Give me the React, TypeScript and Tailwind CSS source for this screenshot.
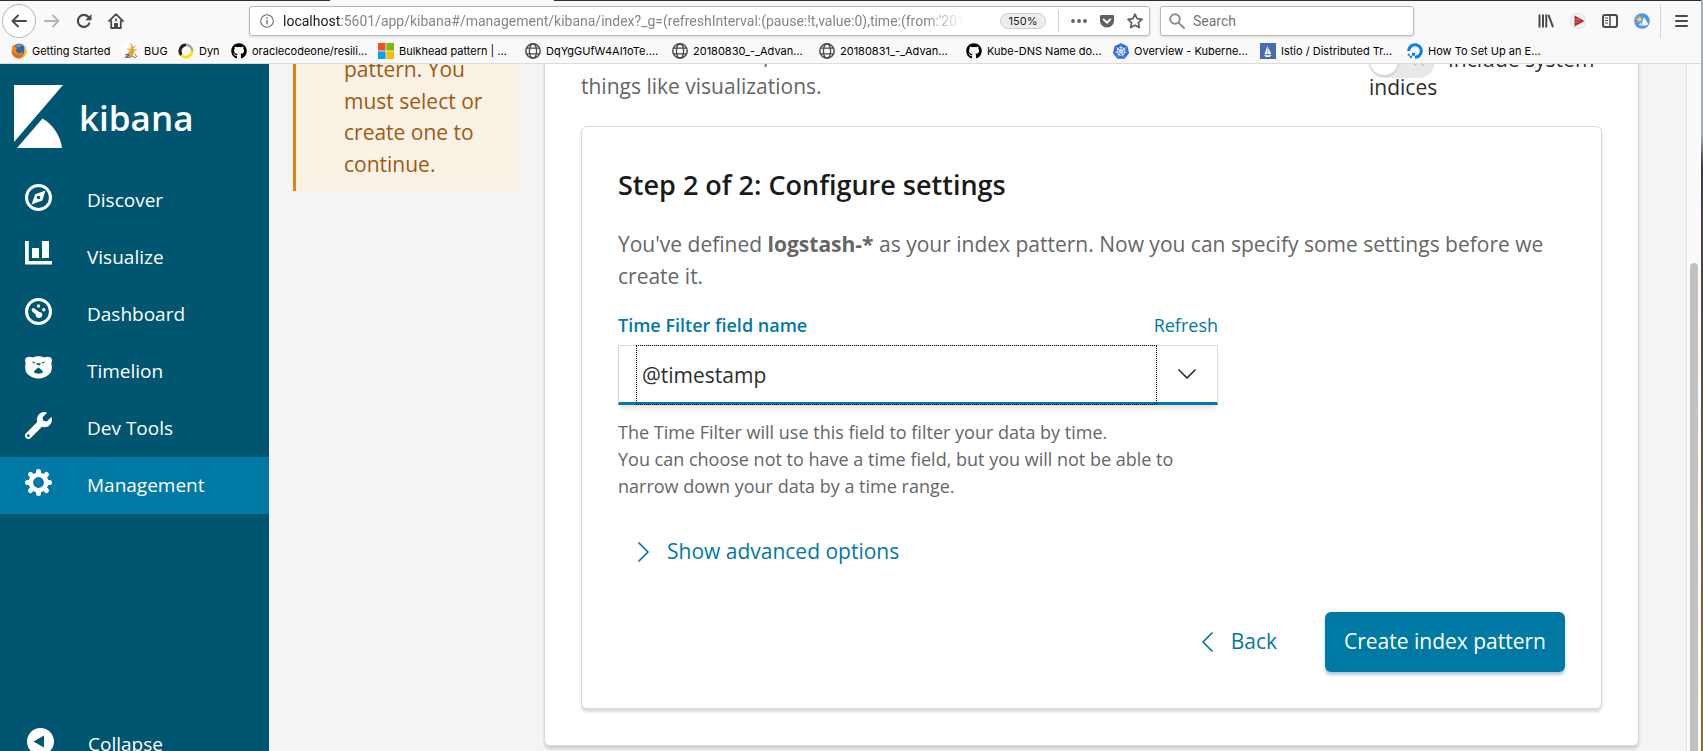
import type { ReactNode } from "react";
import { FaGithub, FaGetPocket, FaWrench, FaDigitalOcean } from "react-icons/fa";
import { SiKubernetes } from "react-icons/si";

function FirefoxIcon() {
  return (
    <svg viewBox="0 0 16 16" className="size-4 shrink-0" aria-hidden="true">
      <circle cx="8" cy="8" r="7.5" fill="#e8641b" />
      <circle cx="8.6" cy="6.6" r="5.4" fill="#2b66b0" />
      <path d="M5 2.5C7 1 10 1 12 3c-2-.6-3 .2-3.500 1.200C7 4 6 3.500 5 2.500z" fill="#5aa7e0" />
      <path d="M.8 5C1 3.500 1.500 2.500 2.300 2c.1 1 .6 1.600 1.400 1.900 1 .2 1.800.1 2.800.9L4.800 6.600c-.2 2 1.200 3.600 3.400 3.600 1.800 0 2.600-1.200 3.900-.8-1 2.300-3.600 3-6 2.200C3 10.600 1 8 .8 5z" fill="#f08a1d" />
      <path d="M12.500 2c2.500 2 3.600 5.500 2.400 8.600-1 2.900-3.800 4.900-6.900 4.900 3-1 4.500-3 5-5.500.5-3 .3-5.500-.5-8z" fill="#fbbf24" />
    </svg>
  );
}

function BugIcon() {
  return (
    <svg viewBox="0 0 16 16" className="size-4 shrink-0" aria-hidden="true">
      <rect width="16" height="16" fill="#fdfdfb" />
      <path d="M1 15l5-6 4 2-2 4z" fill="#8d9a8a" />
      <path d="M3 15l4-4M5 12l-3-1M12 11l2 3M9 13l4 2" stroke="#4c4a3a" strokeWidth=".8" />
      <path d="M8 1.500c1.500 0 2 1.500 1.800 2.800 1.200 2 2 4.500.7 7.200L7 13.500 5.500 10C6.500 7.500 8 6 8 4z" fill="#e9a51d" />
      <path d="M10 5l2.500-2.500M10.500 7.500l3-1M7 7L4.500 5.500M8.500 2L7 .5" stroke="#c77d10" strokeWidth=".9" />
    </svg>
  );
}

function DynIcon() {
  return (
    <svg viewBox="0 0 16 16" className="size-4 shrink-0" aria-hidden="true">
      <path d="M8 .5a7.500 7.500 0 0 0-5.500 12.600L4.500 11A5 5 0 0 1 8 3.200z" fill="#222" />
      <path d="M8 .5a7.500 7.500 0 0 1 7.500 7.500L13 9A5 5 0 0 0 8 3.200z" fill="#a8a8a0" />
      <path d="M15.500 8a7.500 7.500 0 0 1-13 5.100l1.800-2C7 14 12 13 13 7.500z" fill="#f5e50a" />
    </svg>
  );
}

function WindowsIcon() {
  return (
    <svg viewBox="0 0 16 16" className="size-4 shrink-0" aria-hidden="true">
      <path d="M0 0h7.600v7.600H0z" fill="#f25022" />
      <path d="M8.400 0H16v7.600H8.400z" fill="#7fba00" />
      <path d="M0 8.400h7.600V16H0z" fill="#00a4ef" />
      <path d="M8.400 8.400H16V16H8.400z" fill="#ffb900" />
    </svg>
  );
}

function GlobeIcon() {
  return (
    <svg viewBox="0 0 16 16" className="size-4 shrink-0" fill="none" stroke="#4a4a4a" aria-hidden="true">
      <circle cx="8" cy="8" r="7.200" strokeWidth="1.500" />
      <ellipse cx="8" cy="8" rx="3.600" ry="7.200" strokeWidth="1.300" />
      <path d="M1.500 5.200h13M1.500 10.800h13" strokeWidth="1.300" />
    </svg>
  );
}

function SailIcon() {
  return (
    <svg viewBox="0 0 16 16" className="size-4 shrink-0" aria-hidden="true">
      <rect width="16" height="16" fill="#466bb0" />
      <path d="M7.600 2v9L4.500 11.500zM8.200 4.500l3 6.500-3 .3zM4 12.300h8L9.500 14h-3.500z" fill="#fff" />
    </svg>
  );
}

type Bookmark = { label: string; icon: ReactNode; width: string };

const wide = "w-[147px]";
const bookmarks: Bookmark[] = [
  { label: "Getting Started", icon: <FirefoxIcon />, width: "w-[112px]" },
  { label: "BUG", icon: <BugIcon />, width: "w-[55px]" },
  { label: "Dyn", icon: <DynIcon />, width: "w-[53px]" },
  { label: "oraclecodeone/resili...", icon: <FaGithub className="size-4 shrink-0" />, width: wide },
  { label: "Bulkhead pattern | ...", icon: <WindowsIcon />, width: wide },
  { label: "DqYgGUfW4AI1oTe....", icon: <GlobeIcon />, width: wide },
  { label: "20180830_-_Advan...", icon: <GlobeIcon />, width: wide },
  { label: "20180831_-_Advan...", icon: <GlobeIcon />, width: wide },
  { label: "Kube-DNS Name do...", icon: <FaGithub className="size-4 shrink-0" />, width: wide },
  { label: "Overview - Kuberne...", icon: <SiKubernetes className="size-4 shrink-0 text-[#326ce5]" />, width: wide },
  { label: "Istio / Distributed Tr...", icon: <SailIcon />, width: wide },
  { label: "How To Set Up an E...", icon: <FaDigitalOcean className="size-4 shrink-0 text-[#0080ff]" />, width: wide },
];

function Toolbar() {
  return (
    <div className="flex h-10 items-center pr-3 pl-0.5">
      <button aria-label="Back" className="flex size-[34px] shrink-0 items-center justify-center rounded-full border border-[#b5b5b5] bg-white">
        <svg viewBox="0 0 16 16" className="size-4" fill="none" stroke="#4a4a4a" strokeWidth="2" strokeLinecap="round" strokeLinejoin="round">
          <path d="M15 8H1.500M7 2.500L1.500 8 7 13.500" />
        </svg>
      </button>
      <button aria-label="Forward" className="ml-2 shrink-0">
        <svg viewBox="0 0 16 16" className="size-4" fill="none" stroke="#b3b3b3" strokeWidth="1.800" strokeLinecap="round" strokeLinejoin="round">
          <path d="M1 8h13.500M9 2.500L14.500 8 9 13.500" />
        </svg>
      </button>
      <button aria-label="Reload" className="ml-4 shrink-0">
        <svg viewBox="0 0 16 16" className="size-4" fill="none" stroke="#4a4a4a" strokeWidth="2.200">
          <path d="M13.300 10.400A6 6 0 1 1 12.200 3.800" strokeLinecap="round" />
          <path d="M15.500 1v6.200H9.300z" fill="#4a4a4a" stroke="none" />
        </svg>
      </button>
      <button aria-label="Home" className="ml-4 shrink-0">
        <svg viewBox="0 0 16 16" className="size-4" fill="none" stroke="#4a4a4a" strokeWidth="1.800" strokeLinejoin="round" strokeLinecap="round">
          <path d="M1 8.200L8 1.200l7 7M3.200 8v7h9.600V8" />
          <path d="M6.500 15v-4.500h3V15z" fill="#4a4a4a" strokeWidth="1" />
          <path d="M8 6.500v1" />
        </svg>
      </button>

      <div className="ml-[125px] flex h-[30px] w-[901px] min-w-0 shrink items-center rounded-[3px] border border-[#b9b9b9] bg-white pr-1.5 pl-2.5 shadow-sm">
        <svg viewBox="0 0 14 14" className="size-3.5 shrink-0" fill="none" stroke="#6a6a6a" strokeWidth="1.100" aria-hidden="true">
          <circle cx="7" cy="7" r="6.300" />
          <path d="M7 6v4.500M7 3.300v1.400" strokeWidth="1.400" />
        </svg>
        <div className="ml-[9px] min-w-0 flex-1 overflow-hidden font-[Roboto,sans-serif] text-[14px] whitespace-nowrap text-[#858585] [mask-image:linear-gradient(to_right,black_94%,transparent)]">
          <span className="text-[#1a1a1a]">localhost</span>
          :5601/app/kibana#/management/kibana/index?_g=(refreshInterval:(pause:!t,value:0),time:(from:'2018
        </div>
        <button className="ml-[35px] h-4 w-[46px] shrink-0 rounded-full border border-[#cfcfcf] bg-[#ededed] text-[11px] leading-[14px] text-[#222]">150%</button>
        <span className="ml-3 h-[22px] w-px shrink-0 bg-[#cfcfcf]" />
        <button aria-label="Page actions" className="ml-3 shrink-0">
          <svg viewBox="0 0 16 16" className="size-4" fill="#606060">
            <circle cx="2" cy="8" r="1.900" />
            <circle cx="8" cy="8" r="1.900" />
            <circle cx="14" cy="8" r="1.900" />
          </svg>
        </button>
        <button aria-label="Save to Pocket" className="ml-3 shrink-0">
          <FaGetPocket className="size-4 text-[#606060]" />
        </button>
        <button aria-label="Bookmark this page" className="ml-3 shrink-0">
          <svg viewBox="0 0 16 16" className="size-4" fill="none" stroke="#606060" strokeWidth="1.700" strokeLinejoin="round">
            <path d="M8 1.200l2.100 4.500 4.900.6-3.600 3.400.9 4.900L8 12.200l-4.300 2.400.9-4.900L1 6.300l4.900-.6z" />
          </svg>
        </button>
      </div>

      <label className="ml-2.5 flex h-[30px] w-[254px] shrink-0 items-center gap-2 rounded-[3px] border border-[#b9b9b9] bg-white px-2 shadow-sm">
        <svg viewBox="0 0 16 16" className="size-4 shrink-0" fill="none" stroke="#8c8c8c" strokeWidth="2" strokeLinecap="round" aria-hidden="true">
          <circle cx="6" cy="6" r="4.800" />
          <path d="M9.600 9.600L15 15" />
        </svg>
        <input type="search" aria-label="Search" placeholder="Search" className="min-w-0 flex-1 bg-transparent font-[Roboto,sans-serif] text-[14px] outline-none placeholder:text-[#757575]" />
      </label>

      <div className="ml-auto flex items-center gap-4">
        <button aria-label="Library">
          <svg viewBox="0 0 16 16" className="size-4" fill="none" stroke="#4a4a4a" strokeWidth="2">
            <path d="M1.500 1.500v13M5 1.500v13M8.300 1.500v13M10.500 1.800l4.500 12.400" />
          </svg>
        </button>
        <button aria-label="Player">
          <svg viewBox="0 0 16 16" className="size-4">
            <circle cx="8" cy="8" r="7.500" fill="#f7f7f7" stroke="#dedede" />
            <path d="M4.500 2.500L14.500 8l-10 5.500z" fill="#b7282e" />
            <path d="M5 7c2-1.500 4-.8 5 1M5.500 9.500c1-.8 2-.7 3 0" stroke="#e7a9aa" strokeWidth=".8" fill="none" />
          </svg>
        </button>
        <button aria-label="Sidebars">
          <svg viewBox="0 0 16 16" className="size-4" fill="none" stroke="#4a4a4a">
            <rect x="1" y="2" width="14" height="12" rx="2" strokeWidth="2" />
            <path d="M8 2v12" strokeWidth="1.500" />
            <path d="M3 5h3M3 7.500h3M3 10h3" />
          </svg>
        </button>
        <button aria-label="Weather">
          <svg viewBox="0 0 16 16" className="size-4">
            <circle cx="8" cy="8" r="7.800" fill="#4b94e8" />
            <circle cx="5.500" cy="6.500" r="2.300" fill="#f9cf45" />
            <path d="M5.500 2.500v1.200M1.800 6.500H3M2.800 3.500l.8.8M8.200 3.500l-.8.8M2.800 9.500l.8-.8" stroke="#f9cf45" strokeWidth=".9" />
            <path d="M7 12.500l3-8.500 4 6.500c0 1.200-.8 2-2 2z" fill="#f3f6fb" />
            <path d="M5 12.500a2 2 0 0 1 2-2.500l2 1v1.500z" fill="#cfdcec" />
          </svg>
        </button>
        <span className="-mr-1 -ml-1.5 h-[34px] w-px bg-[#d6d6d6]" />
        <button aria-label="Open menu">
          <svg viewBox="0 0 16 16" className="size-4" stroke="#4a4a4a" strokeWidth="2" strokeLinecap="round">
            <path d="M3 3h11M3 8h11M3 13h11" />
          </svg>
        </button>
      </div>
    </div>
  );
}

function BrowserChrome() {
  return (
    <header className="shrink-0 border-b border-[#dcdcdc] bg-[#f9f9fa] font-[Inter,sans-serif]">
      <div className="flex h-px">
        <span className="w-[330px] bg-[#2b2f3f]" />
        <span className="w-[224px]" />
        <span className="flex-1 bg-[#2b2f3f]" />
      </div>
      <Toolbar />
      <nav aria-label="Bookmarks" className="flex h-[22px] items-start pt-0.5 pl-[11px]">
        {bookmarks.map((b) => (
          <a key={b.label} href="#bookmark" className={`flex shrink-0 items-center gap-[5px] text-[11px] leading-4 whitespace-nowrap text-black ${b.width}`}>
            {b.icon}
            {b.label}
          </a>
        ))}
      </nav>
    </header>
  );
}

function DiscoverIcon() {
  return (
    <svg viewBox="0 0 27 27" className="size-[27px]" aria-hidden="true">
      <circle cx="13.500" cy="13.500" r="12" fill="none" stroke="#fff" strokeWidth="3" />
      <path fillRule="evenodd" d="M20.500 6.500l-3.200 10-10.800 4 3.700-10.300zM13.500 11.700a1.800 1.800 0 1 0 0 3.600 1.800 1.800 0 0 0 0-3.600z" fill="#fff" />
    </svg>
  );
}

function VisualizeIcon() {
  return (
    <svg viewBox="0 0 27 27" className="size-[27px]" fill="#fff" aria-hidden="true">
      <path d="M0 0h3.800v20H27v3.500H0zM7 7h7v10H7zM17 0h7v17h-7z" />
    </svg>
  );
}

function DashboardIcon() {
  return (
    <svg viewBox="0 0 27 27" className="size-[27px]" aria-hidden="true">
      <circle cx="13.500" cy="13.500" r="12" fill="none" stroke="#fff" strokeWidth="3" />
      <g fill="#fff">
        <circle cx="13.500" cy="8" r="1.700" />
        <circle cx="18.800" cy="11.800" r="1.700" />
        <path d="M6.800 11.200c.6-1.500 2-1.400 2.900-.4l4.500 3.200c3.300 0 4.100 3.600 2 5.300-2.600 2-6 0-5.500-2.700L7.300 13.400c-.6-.6-.8-1.400-.5-2.200z" />
      </g>
    </svg>
  );
}

function TimelionIcon() {
  return (
    <svg viewBox="0 0 27 27" className="size-[27px]" aria-hidden="true">
      <path d="M1.500 2.500C3.500 1.300 6 1.700 7.500 2.500c4-1.600 8-1.600 12 0 1.500-.8 4-1.200 6 0 1.800 1 1.700 3.500.8 5.500.8 2.700.7 6.300-.3 9-2.500 4-7.500 6.500-12.500 6.500S3.500 21 1 17C0 14.300-.1 10.700.7 8-.2 6-.3 3.500 1.500 2.500z" fill="#fff" />
      <path d="M6.500 6.200l4.200 1.500-2 .8zM20.500 6.200l-4.200 1.500 2 .8zM11 8.300h5l-1.500 1.900h-2zM9 17.500c0-2.500 3-3.500 4.500-5 1.500 1.500 4.500 2.500 4.500 5-2.500 1.500-6.500 1.500-9 0z" fill="#005571" />
    </svg>
  );
}

function GearIcon() {
  return (
    <svg viewBox="0 0 27 27" className="size-[27px]" fill="none" stroke="#fff" aria-hidden="true">
      <circle cx="13.500" cy="13.500" r="7.700" strokeWidth="4.600" />
      <path d="M13.500 5.500V2.500M13.500 21.500v3M5.500 13.500H2.500M21.500 13.500h3M7.500 7.500L5.500 5.500M19.500 19.500l2 2M7.500 19.500l-2 2M19.500 7.500l2-2" strokeWidth="5" strokeLinecap="round" />
    </svg>
  );
}

const navItems: { label: string; icon: ReactNode; active?: boolean }[] = [
  { label: "Discover", icon: <DiscoverIcon /> },
  { label: "Visualize", icon: <VisualizeIcon /> },
  { label: "Dashboard", icon: <DashboardIcon /> },
  { label: "Timelion", icon: <TimelionIcon /> },
  { label: "Dev Tools", icon: <FaWrench className="size-[27px]" /> },
  { label: "Management", icon: <GearIcon />, active: true },
];

function Sidebar() {
  return (
    <aside className="flex w-[269px] shrink-0 flex-col bg-[#005571] text-white">
      <a href="#home" className="flex h-[108px] items-center pb-1 pl-3.5">
        <svg viewBox="0 0 49 63" className="h-[63px] w-[49px]" fill="#fff" aria-hidden="true">
          <path d="M0 0h49L0 57z" />
          <path d="M3 63l25.500-29.500C38 39 46.500 50 48 63z" />
        </svg>
        <span className="ml-4 pt-0.5 text-[35px] leading-none font-semibold">kibana</span>
      </a>
      <nav className="flex flex-1 flex-col text-[19px]">
        {navItems.map((item) => (
          <a key={item.label} href="#nav" className={`flex h-[57px] shrink-0 gap-[35px] pl-[25px] ${item.active ? "bg-[#0079a5]" : ""}`}>
            <span className="pt-3">{item.icon}</span>
            <span className="leading-[57px]">{item.label}</span>
          </a>
        ))}
        <button className="mt-auto -mb-[22px] flex h-[57px] shrink-0 gap-[34px] pl-[27px] text-left">
          <span className="pt-3">
            <svg viewBox="0 0 27 27" className="size-[27px]" aria-hidden="true">
              <circle cx="13.500" cy="13.500" r="13.500" fill="#fff" />
              <path d="M6.500 13.500L17 7.500v12z" fill="#005571" />
            </svg>
          </span>
          <span className="leading-[57px]">Collapse</span>
        </button>
      </nav>
    </aside>
  );
}

function Chevron({ d, className }: { d: string; className: string }) {
  return (
    <svg viewBox="0 0 20 20" className={className} fill="none" stroke="currentColor" strokeWidth="1.700" strokeLinecap="round" strokeLinejoin="round" aria-hidden="true">
      <path d={d} />
    </svg>
  );
}

function StepCard() {
  return (
    <section className="rounded-md border border-[#d9d9d9] bg-white p-9 shadow-[0_3px_3px_rgba(0,0,0,0.15)]">
      <h2 className="text-[27px] leading-[44px] font-semibold text-[#1a1a1a]">Step 2 of 2: Configure settings</h2>
      <p className="mt-[22px]">
        You've defined <strong>logstash-*</strong> as your index pattern. Now you can specify some settings before we create it.
      </p>
      <div className="mt-5 max-w-[600px] text-[18px]">
        <div className="flex justify-between text-[#0079a5]">
          <label htmlFor="time-field" className="font-semibold">Time Filter field name</label>
          <a href="#refresh">Refresh</a>
        </div>
        <div className="mt-1.5 flex h-[60px] border border-b-3 border-[#d9d9d9] border-b-[#0079a5] pl-[17px] text-[#2d2d2d] shadow-[0_5px_5px_-2px_rgba(0,0,0,0.12)]">
          <select id="time-field" className="-mt-px -mb-[3px] flex-1 appearance-none border border-dotted border-black px-[5px] pt-0.5 text-[21px] outline-none">
            <option>@timestamp</option>
          </select>
          <span className="flex w-[60px] items-center justify-center">
            <Chevron d="M2 6l8 8 8-8" className="size-5" />
          </span>
        </div>
        <p className="mt-[14px]">
          The Time Filter will use this field to filter your data by time.
          <br />
          You can choose not to have a time field, but you will not be able to narrow down your data by a time range.
        </p>
      </div>
      <button className="mt-9 flex items-center gap-[13px] pl-4 text-[#0079a5]">
        <Chevron d="M5 1l9 9-9 9" className="size-5" />
        Show advanced options
      </button>
      <div className="mt-11 flex items-center justify-end gap-12">
        <button className="flex items-center gap-3.5 text-[#0079a5]">
          <Chevron d="M15 1l-9 9 9 9" className="size-5" />
          Back
        </button>
        <button className="h-[60px] rounded-md bg-[#0079a5] px-[19px] font-medium text-white shadow-[0_3px_3px_rgba(0,90,130,0.3)]">Create index pattern</button>
      </div>
    </section>
  );
}

function Main() {
  return (
    <main className="flex min-w-0 flex-1 items-start overflow-hidden bg-[#f4f4f4] pr-[47px] pl-6 text-[21px] leading-normal text-[#666]">
      <div className="-mt-2.5 w-[228px] shrink-0 border-l-3 border-[#e5830e] bg-[#fbf2e6] pr-6 pb-[11px] pl-12 text-[#a05a0d]">
        pattern. You must select or create one to continue.
      </div>
      <div className="-mt-[26px] ml-[23px] flex-1 rounded-md border border-[#d9d9d9] bg-white px-9 pb-9 shadow-[0_3px_3px_rgba(0,0,0,0.15)]">
        <div className="flex justify-between pb-6">
          <p className="max-w-[760px]">
            Kibana uses index patterns to retrieve data from Elasticsearch indices for things like visualizations.
          </p>
          <label className="w-[233px] pt-1.5 leading-7 text-[#2d2d2d]">
            <input type="checkbox" className="peer sr-only" />
            <span className="-my-2 mr-[13px] inline-flex h-[33px] w-[66px] items-center justify-between rounded-full bg-[#e9e9e9] pr-2 align-middle">
              <span className="size-[30px] rounded-full border border-[#ddd] bg-white shadow" />
              <Chevron d="M5 5l10 10M15 5L5 15" className="size-4 text-[#bbb]" />
            </span>
            Include system indices
          </label>
        </div>
        <StepCard />
      </div>
    </main>
  );
}

export default function App() {
  return (
    <div className="flex h-screen overflow-hidden font-['Open_Sans',sans-serif]">
      <div className="flex min-w-0 flex-1 flex-col">
        <BrowserChrome />
        <div className="flex min-h-0 flex-1">
          <Sidebar />
          <Main />
          <div className="flex w-[15px] shrink-0 flex-col items-center border-l border-[#e6e6e6] bg-[#fafafa] pt-[199px]">
            <span className="w-2 flex-1 rounded-t-full bg-[#c1c1c1]" />
          </div>
        </div>
      </div>
      <div className="w-0.5 shrink-0 bg-linear-to-b from-[#a9abbd] from-18% via-[#3b3a44] via-22% to-[#9a6a1c]" />
    </div>
  );
}
